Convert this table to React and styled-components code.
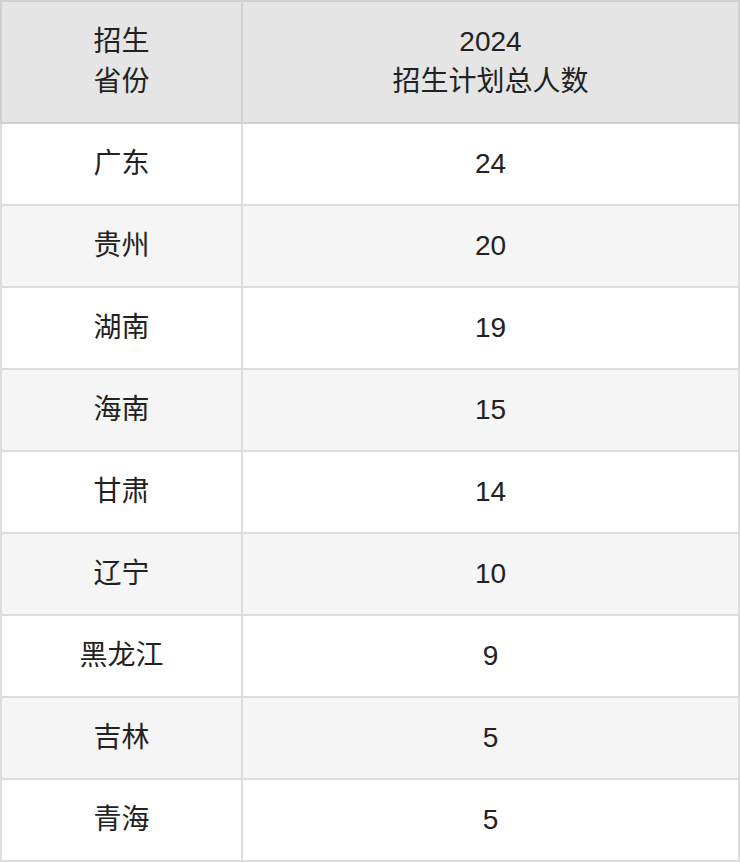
import React from 'react';
import styled, { createGlobalStyle } from 'styled-components';

const GlobalStyle = createGlobalStyle`
  html, body {
    margin: 0;
    padding: 0;
    background: #ffffff;
  }
`;

const rows = [
  [ '广东', '24' ],
  [ '贵州', '20' ],
  [ '湖南', '19' ],
  [ '海南', '15' ],
  [ '甘肃', '14' ],
  [ '辽宁', '10' ],
  [ '黑龙江', '9' ],
  [ '吉林', '5' ],
  [ '青海', '5' ],
];

export default function App() {
  return (
    <>
      <GlobalStyle/>
      <Table>
        <colgroup>
          <col style={ { width: '241px' } }/>
          <col/>
        </colgroup>
        <thead>
          <tr>
            <HeadCell>招生<br/>省份</HeadCell>
            <HeadCell>2024<br/>招生计划总人数</HeadCell>
          </tr>
        </thead>
        <tbody>
          { rows.map( ( [ name, count ], i ) => (
            <Row key={ name } striped={ i % 2 === 1 ? 1 : 0 }>
              <Cell>{ name }</Cell>
              <Cell>{ count }</Cell>
            </Row>
          ) ) }
        </tbody>
      </Table>
    </>
  );
}

const Table = styled.table`
  width: 740px;
  border-collapse: collapse;
  table-layout: fixed;
  font-family: "Liberation Sans", "Noto Sans CJK SC", sans-serif;
  font-size: 28px;
  color: #222222;
  border: 2px solid #dddddd;
`;

const HeadCell = styled.th`
  height: 120px;
  padding: 0;
  font-weight: normal;
  line-height: 40px;
  text-align: center;
  vertical-align: middle;
  background: #e5e5e5;
  border: 2px solid #d0d0d0;
`;

const Row = styled.tr`
  background: ${ props => props.striped ? '#f5f5f5' : '#ffffff' };
`;

const Cell = styled.td`
  height: 80px;
  padding: 0;
  line-height: 40px;
  text-align: center;
  vertical-align: middle;
  border: 2px solid #dddddd;
`;
